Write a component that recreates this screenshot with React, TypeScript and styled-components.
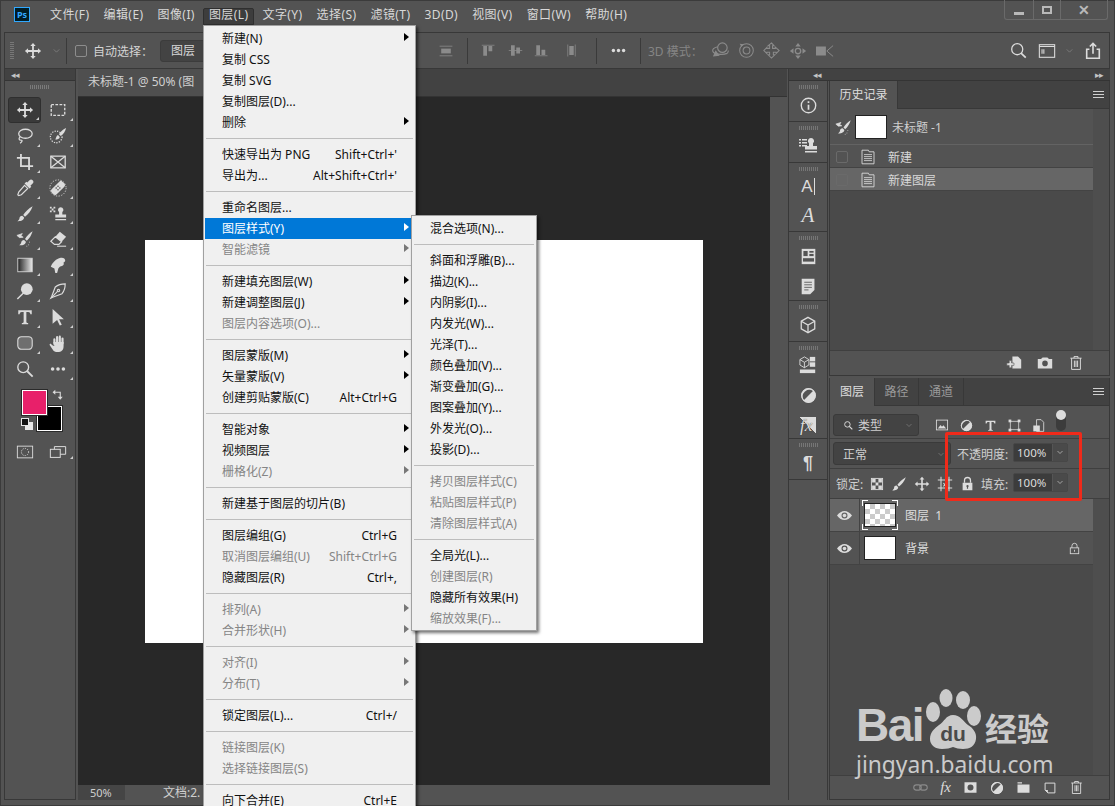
import React from "react";
import styled, { createGlobalStyle } from "styled-components";

const FONT = `"Noto Sans", "Noto Sans CJK SC", sans-serif`;

const GlobalStyle = createGlobalStyle`
  html, body { margin: 0; padding: 0; background: #535353; }
  body { font-family: ${FONT}; font-size: 12px; overflow: hidden; }
  * { box-sizing: border-box; }
`;

// drawings are all on a 20x20 box
const glyphs: Record<string, React.ReactNode> = {
  move: <path d="M10 1l3 3.5h-2V9h4.5V7l3.5 3-3.5 3v-2H11v4.5h2L10 19l-3-3.5h2V11H4.5v2L1 10l3.5-3v2H9V4.5H7z" />,
  chevron: <path d="M5 8l5 5 5-5" fill="none" stroke="currentColor" strokeWidth="1.2" />,
  swap: <g><path d="M4 6h11v10" fill="none" stroke="currentColor" strokeWidth="2" /><path d="M6 1.500v9L1 6zM10.500 14h9L15 19.500z" /></g>,
  marquee: <rect x="2.5" y="4" width="15" height="12" fill="none" stroke="currentColor" strokeWidth="1.5" strokeDasharray="3 1.6" />,
  lasso: <g fill="none" stroke="currentColor" strokeWidth="1.4"><ellipse cx="10.5" cy="7.5" rx="7.5" ry="5" /><path d="M4.5 11c-2 2-1 3.5 1 3.5s1.5 2-1 3.5" /></g>,
  quick: <g><circle cx="8" cy="11" r="6.5" fill="none" stroke="currentColor" strokeWidth="1.4" strokeDasharray="1.4 1.4" /><path d="M19 1c-3 1-6 4-8 7l2 2c3-2 5-5 6-9zM10 9c-2 1-2 3-3 5 2 0 5-1 5-3z" /></g>,
  crop: <path d="M5.5 1v13.5H19M1 5.5h13.5V19M1 5.5" fill="none" stroke="currentColor" strokeWidth="2" />,
  frame: <g fill="none" stroke="currentColor" strokeWidth="1.4"><rect x="2" y="3.5" width="16" height="13" /><path d="M2 3.5l16 13M18 3.5l-16 13" /></g>,
  dropper: <g><path d="M15 1.5a2.2 2.2 0 0 1 3.5 3.5L16 7.5l1 1-2 2-5.5-5.5 2-2 1 1z" /><path d="M9.5 7l3.5 3.5-7 7-3 1-1-1 1-3z" fill="none" stroke="currentColor" strokeWidth="1.3" /></g>,
  heal: <g><circle cx="10" cy="10" r="9" fill="none" stroke="currentColor" strokeDasharray="1.4 1.6" /><rect x="1.5" y="6" width="17" height="8" rx="2.5" transform="rotate(-45 10 10)" /><g fill="#535353"><circle cx="8" cy="10" r=".9" /><circle cx="10" cy="8" r=".9" /><circle cx="12" cy="10" r=".9" /><circle cx="10" cy="12" r=".9" /></g></g>,
  brush: <path d="M18.5 1.5C14 4 10.5 7.5 8 11l2 2c3.5-2.5 6.5-6 8.5-11.500zM7 12c-2 0-3 1-3.200 3-.1 1-1.300 2.300-2.300 3 3.500.3 7.500-1 7.500-4z" />,
  stamp: <g><path d="M13 2.500a3 3 0 0 1 1.800 5.400V10.500H19V14H7v-3.500h4.200V7.900A3 3 0 0 1 13 2.500zM7 15.500h12V17H7z" /><path d="M1 2h2v2H1zM5 2h2v2H5zM3 4h2v2H3zM1 6h2v2H1zM5 6h2v2H5z" /></g>,
  historyBrush: <g><path d="M18.500 1.500C15 3.500 12 7 10 10l2 2c3-2.500 5-6 6.500-10.500zM9 11c-2 0-3 1-3.200 3-.1 1-1.300 2.300-2.300 3 3.500.3 7.500-1 7.500-4z" /><path d="M1 6l6-2-1.500 2.500L8 8l-4 .5zM15 13v1M14 16v1M11.500 18h1" stroke="currentColor" strokeWidth=".8" /></g>,
  eraser: <g><path d="M12 2l7 5.500-5 5.500-7-5.500z" /><path d="M7 7.500l7 5.500-3 3H6l-4-3.500z" fill="none" stroke="currentColor" strokeWidth="1.3" /><path d="M9 18h10" stroke="currentColor" strokeWidth="1.2" /></g>,
  gradient: <g><defs><linearGradient id="gr"><stop offset="0" stopColor="#222" /><stop offset="1" stopColor="#e8e8e8" /></linearGradient></defs><rect x="2" y="2.500" width="16" height="15" fill="url(#gr)" stroke="#d6d6d6" strokeWidth="1" /></g>,
  smudge: <path d="M7 19l-1-5-4-2c2-5 6-9 11-10 3-.5 5 1 5 3 0 1-1 2-2 2.500 1 1 .5 3-1.500 3.500-2 .5-3 1-4 2.500L9 19z" />,
  dodge: <g><circle cx="12" cy="8" r="6.500" /><path d="M8 12.500L1.500 19" stroke="currentColor" strokeWidth="1.600" /></g>,
  pen: <g fill="none" stroke="currentColor" strokeWidth="1.300"><path d="M18 2c-4 0-8 1-11 3.500L3 16l-1 2 2-1 10.500-4c2.500-3 3.500-7 3.500-11z" /><path d="M3 17l6.500-6.500" /><circle cx="10.500" cy="9.500" r="1.300" /></g>,
  type: <path d="M2.500 2.500h15V7H16c-.2-1.500-1-2.500-2.500-2.500h-2v10.800c0 1 .6 1.500 2 1.500v1.200h-7v-1.200c1.400 0 2-.5 2-1.500V4.500h-2C5 4.500 4.200 5.500 4 7H2.500z" />,
  pathSel: <path d="M4 1l12.500 11.500h-5.300l3 6-2.200 1-3-6.200L4 17.500z" />,
  rrect: <rect x="2" y="3" width="16" height="14" rx="4" fill="#6f6f6f" stroke="currentColor" strokeWidth="1.200" />,
  hand: <g><path d="M6 11V6M9 9.500V3.500M12 9.500V3M15 10.500V5" stroke="currentColor" strokeWidth="2.400" strokeLinecap="round" /><path d="M4.800 9L6 13H4.500L1.500 10.500.5 12l4.500 6.500c1 1 2.500 1.500 4.500 1.500 4.500 0 6.700-2.500 6.700-6.500V9H4.800z" /></g>,
  zoom: <g fill="none" stroke="currentColor"><circle cx="8" cy="8" r="6" strokeWidth="1.500" /><path d="M12.500 12.500L18.500 18.500" strokeWidth="2" /></g>,
  dots: <g><circle cx="4" cy="10" r="2" /><circle cx="10" cy="10" r="2" /><circle cx="16" cy="10" r="2" /></g>,
  quickMask: <g fill="none" stroke="currentColor"><rect x="1.500" y="3.500" width="17" height="13" /><circle cx="10" cy="10" r="4" strokeDasharray="1.300 1.300" /></g>,
  screen: <g fill="none" stroke="currentColor" strokeWidth="1.100"><rect x="1.500" y="7" width="11" height="9" /><path d="M6 7V4h12.500v8.500H12.500" /></g>,
  search: <g fill="none" stroke="currentColor"><circle cx="8.500" cy="8.500" r="6.500" strokeWidth="1.500" /><path d="M13 13l5.500 5.500" strokeWidth="2" /></g>,
  workspace: <g fill="none" stroke="currentColor" strokeWidth="1.200"><rect x="1.500" y="3" width="17" height="14" /><path d="M1.500 5h17M4.500 8v5M6.500 8v5" strokeWidth="1.200" /></g>,
  share: <g fill="none" stroke="currentColor" strokeWidth="1.500"><path d="M6 8H3v10h14V8h-3" strokeWidth="1.800" /><path d="M10 13V2M6.500 5L10 1.500 13.500 5" strokeWidth="1.800" /></g>,
  alignMid: <g><path d="M2 4h16M2 16h16" stroke="currentColor" /><rect x="4" y="7" width="12" height="6" /></g>,
  alignTop: <g><path d="M1 3h17" stroke="currentColor" /><rect x="3" y="4" width="5" height="13" /><rect x="10" y="4" width="5" height="7" /></g>,
  alignCenter: <g><path d="M1 10h18" stroke="currentColor" /><rect x="4" y="3" width="5" height="14" /><rect x="11" y="6" width="5" height="8" /></g>,
  alignBottom: <g><path d="M1 17h17" stroke="currentColor" /><rect x="3" y="3" width="5" height="13" /><rect x="10" y="9" width="5" height="7" /></g>,
  distribute: <g><path d="M5 2v16M15 2v16" stroke="currentColor" /><rect x="7" y="4" width="6" height="12" /></g>,
  orbit: <g fill="none" stroke="currentColor" strokeWidth="1.200"><circle cx="12" cy="7" r="5" /><path d="M7 6c-4 1-6 3-5 5 1 3 10 4 15 2 1-.5 1.500-1.500 1-3" /><path d="M5 11l3 4-5 .5z" fill="currentColor" /></g>,
  roll: <g fill="none" stroke="currentColor" strokeWidth="1.200"><circle cx="10" cy="10" r="8" /><circle cx="10" cy="10" r="4" /><path d="M2 2l5 .5L4 6z" fill="currentColor" stroke="none" /></g>,
  pan3d: <g fill="none" stroke="currentColor" strokeWidth="1.200"><path d="M10 1l3 3.500h-1.800v3h3.300V6L19 10l-3.500 3.500V12h-3.300v3H14l-4 4-4-4h1.800v-3H4.500v1.500L1 10l3.500-3.500v1h3.300v-3H6z" /></g>,
  slide3d: <g><circle cx="10" cy="10" r="3" fill="none" stroke="currentColor" strokeWidth="1.500" /><path d="M10 1l3 4H7zM10 19l3-4H7zM1 10l4-3v6zM19 10l-4-3v6z" /></g>,
  camera3d: <g><rect x="0" y="5" width="11" height="10" /><path d="M12 10l7-6M12 10l7 6" fill="none" stroke="currentColor" strokeWidth="1.100" /></g>,
  info: <g fill="none" stroke="currentColor"><circle cx="10" cy="10" r="8.500" strokeWidth="1.600" /><path d="M10 9v6M10 5v2" strokeWidth="2" /></g>,
  stampList: <g><path d="M1 3h2v1.500H1zM4 3h5v1.500H4zM1 6h2v1.500H1zM4 6h5v1.500H4zM1 9h2v1.500H1zM4 9h5v1.500H4z" /><path d="M13 2a3 3 0 0 1 2 5.300V10h4v3.500H7V10h4V7.300A3 3 0 0 1 13 2zM7 15h12v1.500H7z" /></g>,
  props: <g><rect x="2" y="1" width="16" height="18" /><g fill="#535353"><rect x="4" y="3.500" width="5" height="6" /><rect x="11" y="3.500" width="5" height="2" /><rect x="11" y="7" width="5" height="2.500" /><rect x="3.500" y="12" width="13" height="4" /></g></g>,
  notes: <g><path d="M2 1h15v13l-5 5H2z" /><g stroke="#535353" strokeWidth="1"><path d="M5 5h9M5 8h9M5 11h9M5 14h5" /></g></g>,
  cube: <g fill="none" stroke="currentColor" strokeWidth="1.400"><path d="M10 1.500l7.500 4.300v8.400L10 18.500l-7.500-4.300V5.800z" /><path d="M2.500 5.800L10 10l7.500-4.200M10 10v8.500" /></g>,
  libs: <g><path d="M6 1l5 3v6l-5 3-5-3V4z" fill="none" stroke="currentColor" /><path d="M1 4l5 3 5-3M6 7v6" fill="none" stroke="currentColor" /><rect x="12" y="1" width="6" height="5" /><rect x="12" y="7" width="6" height="5" /><rect x="1" y="15" width="17" height="4" /></g>,
  adjust: <g><circle cx="10" cy="10" r="8.500" /><path d="M4.200 15.800A8.500 8.500 0 0 1 15.800 4.200z" fill="#535353" stroke="currentColor" strokeWidth="0" /><circle cx="10" cy="10" r="8" fill="none" stroke="currentColor" strokeWidth="1.400" /></g>,
  doc: <g fill="none" stroke="currentColor"><path d="M2.500 1.500h8l1 2h6v15h-15z" strokeWidth="1.100" /><path d="M5 7h10M5 9.500h10M5 12h10M5 14.500h10" strokeWidth="1" /></g>,
  newSnap: <g><path d="M8 2h7l4 4v11H8z" /><path d="M1 10h3V7h3v3h3v3H7v3H4v-3H1z" stroke="#535353" strokeWidth=".7" /></g>,
  camera: <path fillRule="evenodd" d="M1 5h4l2-2h6l2 2h4v12H1zM10 7a3.500 3.500 0 1 0 0 7 3.500 3.500 0 0 0 0-7z" />,
  trash: <g fill="none" stroke="currentColor" strokeWidth="1.200"><path d="M3 4h14M7.500 4V2h5v2M4.500 4v14h11V4M8 7v8M10 7v8M12 7v8" /></g>,
  filterSearch: <g fill="none" stroke="currentColor"><circle cx="8" cy="8" r="5" strokeWidth="1.700" /><path d="M11.500 11.500L17 17" strokeWidth="2.200" /></g>,
  imageF: <g><rect x="2" y="3" width="16" height="14" fill="none" stroke="currentColor" strokeWidth="1.200" /><path d="M4 15l4-5 2 2.500 2-2 4 4.500z" /></g>,
  transformF: <g fill="none" stroke="currentColor" strokeWidth="1.200"><rect x="3.500" y="3.500" width="13" height="13" /><g fill="currentColor"><rect x="1.500" y="1.500" width="3" height="3" /><rect x="15.500" y="1.500" width="3" height="3" /><rect x="1.500" y="15.500" width="3" height="3" /><rect x="15.500" y="15.500" width="3" height="3" /></g></g>,
  smartF: <g><path d="M7 1h7l4 4v14H7z" fill="none" stroke="currentColor" strokeWidth="1.300" /><rect x="2" y="10" width="10" height="9" /></g>,
  checker: <g><rect x="2" y="2" width="16" height="16" fill="none" stroke="currentColor" strokeWidth="1.300" /><path d="M3 3h5v5H3zM12 3h5v5h-5zM8 8h4v4H8zM3 12h5v5H3zM12 12h5v5h-5z" /></g>,
  artboard: <g fill="none" stroke="currentColor" strokeWidth="1.300"><path d="M5 1v18M15 1v18M1 5h18M1 15h18" /><path d="M8 9l4 4M8 13l4-4" /></g>,
  lock: <g><path d="M6 9V6a4 4 0 0 1 8 0v3" fill="none" stroke="currentColor" strokeWidth="1.700" /><path fillRule="evenodd" d="M3.500 9h13v10h-13zM10 12a1.500 1.500 0 0 0-.8 2.800V17h1.600v-2.200A1.500 1.500 0 0 0 10 12z" /></g>,
  lockOpen: <g fill="none" stroke="currentColor" strokeWidth="1.300"><path d="M6 9V6a4 4 0 0 1 8 0v3" /><rect x="3.500" y="9" width="13" height="9" /><path d="M10 12v3" /></g>,
  eye: <g><path fillRule="evenodd" d="M0 10c3-4 6.500-6 10-6s7 2 10 6c-3 4-6.500 6-10 6s-7-2-10-6zm10-4a4 4 0 1 0 0 8 4 4 0 0 0 0-8z" /><circle cx="10" cy="10" r="2.400" /></g>,
  link: <g fill="none" stroke="currentColor" strokeWidth="1.400"><rect x="1" y="6.500" width="10" height="7" rx="3.500" /><rect x="9" y="6.500" width="10" height="7" rx="3.500" /></g>,
  mask: <path fillRule="evenodd" d="M2 3h16v14H2zM10 6a4 4 0 1 0 0 8 4 4 0 0 0 0-8z" />,
  folder: <path d="M2 3h6v1.500H2zM2 6h16v11H2z" />,
  newLayer: <g><path d="M3 3h14v14H7l-4-4z" fill="none" stroke="currentColor" strokeWidth="1.400" /><path d="M3 13h4v4z" /></g>,
};

const Svg = styled.svg<{ $dim?: boolean; $color?: string }>`
  display: block;
  flex: none;
  color: ${(p) => p.$color || (p.$dim ? "#8b8b8b" : "#dcdcdc")};
`;

const Glyph = ({ name, size = 18, dim, color }: { name: string; size?: number; dim?: boolean; color?: string }) => (
  <Svg viewBox="0 0 20 20" width={size} height={size} fill="currentColor" $dim={dim} $color={color}>
    {glyphs[name]}
  </Svg>
);

const Page = styled.div`
  position: relative;
  width: 1115px;
  height: 806px;
  overflow: hidden;
  background: #535353;
  display: flex;
  flex-direction: column;
  box-shadow: inset 0 0 0 1px #3b3b3b;
`;

/* title bar */
const TitleBar = styled.div`
  height: 32px;
  flex: none;
  display: flex;
  align-items: flex-start;
  padding-left: 14px;
`;
const PsLogo = styled.div`
  width: 16px;
  height: 15px;
  margin-top: 7px;
  margin-right: 20px;
  border: 1px solid #31a8ff;
  background: #001d26;
  color: #31a8ff;
  font-size: 9px;
  font-weight: 700;
  line-height: 13px;
  text-align: center;
`;
const MenuBar = styled.div`
  display: flex;
  gap: 14px;
  padding-top: 6px;
  color: #d8d8d8;
  line-height: 18px;
  letter-spacing: 0.42px;
`;
const MenuTitle = styled.span<{ $open?: boolean }>`
  position: relative;
  white-space: nowrap;
  ${(p) =>
    p.$open &&
    `&::before {
      content: "";
      position: absolute;
      inset: 2px -6px -1px -6px;
      background: #3d3d3d;
      border: 1px solid #2f2f2f;
      border-radius: 2px 2px 0 0;
      z-index: 0;
    }`}
  & > span {
    position: relative;
  }
`;
const WindowButtons = styled.div`
  margin-left: auto;
  margin-right: 7px;
  display: flex;
  height: 20px;
  border: 1px solid #6a6a6a;
  border-top: 0;
  border-radius: 0 0 3px 3px;
`;
const WindowButton = styled.div<{ $w: number }>`
  width: ${(p) => p.$w}px;
  display: flex;
  align-items: center;
  justify-content: center;
  color: #b9b9b9;
  font-size: 14px;
  font-weight: 700;
  & + & {
    border-left: 1px solid #6a6a6a;
  }
`;
const MinBar = styled.div`
  width: 10px;
  height: 3px;
  margin-top: 8px;
  background: #b9b9b9;
`;
const MaxBox = styled.div`
  width: 10px;
  height: 8px;
  border: 2px solid #b9b9b9;
`;

/* options bar */
const OptionsBar = styled.div`
  height: 37px;
  flex: none;
  margin: 0 5px 0 4px;
  display: flex;
  align-items: center;
  border: 1px solid #383838;
`;
const Slot = styled.div<{ $w: number }>`
  width: ${(p) => p.$w}px;
  flex: none;
  display: flex;
  align-items: center;
  justify-content: center;
`;
const Grip = styled.div`
  width: 4px;
  height: 18px;
  background: repeating-linear-gradient(to bottom, #777 0 1px, transparent 1px 2px);
`;
const VDivider = styled.div`
  width: 1px;
  height: 26px;
  background: #3a3a3a;
`;
const CheckBox = styled.div<{ $dim?: boolean }>`
  width: 12px;
  height: 12px;
  flex: none;
  border: 1px solid ${(p) => (p.$dim ? "#6a6a6a" : "#8d8d8d")};
  border-radius: 2px;
`;
const OptionLabel = styled.span<{ $dim?: boolean; $w: number }>`
  width: ${(p) => p.$w}px;
  flex: none;
  white-space: nowrap;
  color: ${(p) => (p.$dim ? "#858585" : "#d4d4d4")};
`;
const OptionSelect = styled.div`
  width: 56px;
  height: 22px;
  padding-left: 10px;
  flex: none;
  line-height: 20px;
  color: #d8d8d8;
  background: #434343;
  border: 1px solid #3c3c3c;
  border-radius: 3px;
`;
const Spacer = styled.div`
  flex: 1;
`;

/* workspace */
const Workspace = styled.div`
  flex: 1;
  min-height: 0;
  display: flex;
  margin: 0 5px 6px 4px;
`;
const CollapseBar = styled.div<{ $between?: boolean }>`
  height: 12px;
  flex: none;
  display: flex;
  align-items: center;
  justify-content: ${(p) => (p.$between ? "space-between" : "flex-start")};
  padding: ${(p) => (p.$between ? "0 7px 0 24px" : "0 0 0 6px")};
  background: #424242;
  color: #c4c4c4;
  font-size: 9px;
  letter-spacing: -1px;
  line-height: 1;
  border-bottom: 1px solid #343434;
`;

/* tool column */
const ToolColumn = styled.div`
  width: 72px;
  flex: none;
  display: flex;
  flex-direction: column;
  border-left: 1px solid #383838;
  border-right: 1px solid #383838;
  border-bottom: 1px solid #383838;
`;
const ToolGrip = styled.div`
  height: 4px;
  width: 20px;
  margin: 4px auto 8px;
  background: repeating-linear-gradient(to right, #7a7a7a 0 1px, transparent 1px 2px);
`;
const ToolGrid = styled.div`
  display: grid;
  grid-template-columns: 33px 33px;
  grid-auto-rows: 25.9px;
  padding-left: 3px;
`;
const ToolButton = styled.div<{ $active?: boolean; $more?: boolean }>`
  position: relative;
  display: flex;
  align-items: center;
  justify-content: center;
  ${(p) => p.$active && "background: #3a3a3a; border: 1px solid #2f2f2f; border-radius: 3px;"}
  ${(p) =>
    p.$more &&
    `&::after {
      content: "";
      position: absolute;
      right: 1px;
      bottom: 2px;
      border-left: 3px solid transparent;
      border-bottom: 3px solid #cfcfcf;
    }`}
`;
const Swatches = styled.div`
  position: relative;
  height: 52px;
  margin-top: 7px;
`;
const Swatch = styled.div<{ $x: number; $y: number; $c: string }>`
  position: absolute;
  left: ${(p) => p.$x}px;
  top: ${(p) => p.$y}px;
  width: 25px;
  height: 25px;
  background: ${(p) => p.$c};
  border: 1px solid #fff;
  outline: 1px solid #2a2a2a;
`;
const SwapIcon = styled.div`
  position: absolute;
  left: 47px;
  top: 0;
`;
const DefaultBack = styled.div`
  position: absolute;
  left: 20px;
  top: 33px;
  width: 8px;
  height: 8px;
  background: #e6e6e6;
`;
const DefaultFront = styled.div`
  position: absolute;
  left: 16px;
  top: 29px;
  width: 8px;
  height: 8px;
  background: #111;
  border: 1px solid #e6e6e6;
`;
const ModeRow = styled.div`
  display: grid;
  grid-template-columns: 33px 33px;
  padding-left: 3px;
  margin-top: 2px;
`;

/* document */
const DocumentArea = styled.div`
  width: 709px;
  margin-left: 2px;
  flex: none;
  display: flex;
  flex-direction: column;
`;
const TabStrip = styled.div`
  height: 28px;
  flex: none;
  background: #424242;
  border-bottom: 1px solid #333;
`;
const DocTab = styled.div`
  width: 200px;
  height: 100%;
  padding-left: 10px;
  line-height: 26px;
  color: #cfcfcf;
  background: #4f4f4f;
  white-space: nowrap;
`;
const CanvasRow = styled.div`
  flex: 1;
  min-height: 0;
  display: flex;
`;
const Pasteboard = styled.div`
  flex: 1;
  display: flex;
  align-items: center;
  justify-content: center;
  background: #282828;
`;
const Artboard = styled.div`
  width: 558px;
  height: 403px;
  background: #fff;
`;
const ScrollStrip = styled.div`
  width: 17px;
  flex: none;
  background: #535353;
`;
const StatusBar = styled.div`
  height: 15px;
  flex: none;
  display: flex;
  line-height: 15px;
  font-size: 11px;
  color: #cfcfcf;
  background: #535353;
`;
const ZoomBox = styled.div`
  width: 47px;
  padding-left: 12px;
  background: #454545;
`;
const DocInfo = styled.div`
  padding-left: 38px;
  font-size: 12px;
  white-space: nowrap;
`;

/* right side */
const RightSide = styled.div`
  flex: 1;
  min-width: 0;
  margin-left: 1px;
  display: flex;
  flex-direction: column;
  border-left: 1px solid #383838;
`;
const DockAndPanels = styled.div`
  flex: 1;
  min-height: 0;
  display: flex;
`;
const Dock = styled.div`
  width: 39px;
  flex: none;
  display: flex;
  flex-direction: column;
  border-right: 1px solid #383838;
`;
const DockGroup = styled.div<{ $h: number }>`
  height: ${(p) => p.$h}px;
  flex: none;
  display: flex;
  flex-direction: column;
  align-items: center;
  border-bottom: 1px solid #383838;
`;
const DockGrip = styled.div`
  width: 19px;
  height: 4px;
  flex: none;
  margin-top: 4px;
  background: repeating-linear-gradient(to right, #767676 0 1px, transparent 1px 2px);
`;
const DockSlot = styled.div<{ $h: number }>`
  height: ${(p) => p.$h}px;
  flex: none;
  display: flex;
  align-items: center;
  justify-content: center;
  color: #dcdcdc;
`;
const CharA = styled.span`
  font-family: "Liberation Sans", sans-serif;
  font-size: 17px;
  border-right: 1px solid #dcdcdc;
  line-height: 17px;
  padding-right: 1px;
`;
const ScriptA = styled.span`
  font-family: "Liberation Serif", serif;
  font-style: italic;
  font-size: 21px;
  line-height: 20px;
`;
const FxBadge = styled.div`
  width: 16px;
  height: 17px;
  font-family: "Liberation Serif", serif;
  font-style: italic;
  font-size: 17px;
  line-height: 18px;
  text-shadow: 0 0 1px #333;
  background: linear-gradient(225deg, #dcdcdc 0 50%, transparent 50%);
`;
const Pilcrow = styled.span`
  font-family: "Liberation Sans", sans-serif;
  font-weight: 700;
  font-size: 18px;
`;

const Panels = styled.div`
  flex: 1;
  min-width: 0;
  margin-left: 1px;
  display: flex;
  flex-direction: column;
  gap: 2px;
`;
const Panel = styled.div<{ $h: number }>`
  height: ${(p) => p.$h}px;
  flex: none;
  display: flex;
  flex-direction: column;
  background: #4a4a4a;
  border-right: 1px solid #383838;
  border-left: 1px solid #383838;
  border-bottom: 1px solid #383838;
`;
const PanelTabs = styled.div`
  height: 28px;
  flex: none;
  display: flex;
  background: #424242;
  border-bottom: 1px solid #383838;
  position: relative;
`;
const PanelTab = styled.div<{ $active?: boolean; $w: number }>`
  width: ${(p) => p.$w}px;
  height: ${(p) => (p.$active ? "28px" : "27px")};
  line-height: 28px;
  text-align: center;
  color: ${(p) => (p.$active ? "#dedede" : "#9a9a9a")};
  background: ${(p) => (p.$active ? "#535353" : "transparent")};
  border-right: 1px solid #383838;
`;
const PanelMenu = styled.div`
  position: absolute;
  right: 5px;
  top: 10px;
  width: 11px;
  height: 7px;
  border-top: 1px solid #cfcfcf;
  border-bottom: 1px solid #cfcfcf;
  &::after {
    content: "";
    display: block;
    height: 1px;
    margin-top: 2px;
    background: #cfcfcf;
  }
`;
const PanelBody = styled.div`
  flex: 1;
  min-height: 0;
  display: flex;
`;
const ListColumn = styled.div`
  flex: 1;
  min-width: 0;
`;
const ScrollGutter = styled.div`
  width: 16px;
  flex: none;
  background: #4e4e4e;
`;
const HistorySnap = styled.div`
  height: 36px;
  display: flex;
  align-items: center;
  padding: 1px 0 0 5px;
  gap: 3px;
  color: #cfcfcf;
  background: #535353;
  border-bottom: 1px solid #636363;
`;
const SnapName = styled.span`
  margin-left: 2px;
`;
const Thumb = styled.div<{ $w?: number; $checker?: boolean }>`
  width: ${(p) => p.$w || 32}px;
  height: 24px;
  flex: none;
  background: #fff;
  border: 1px solid #222;
  ${(p) =>
    p.$checker &&
    `background-color: #fff;
     background-image: conic-gradient(#cbcbcb 25%, #fff 25% 50%, #cbcbcb 50% 75%, #fff 75%);
     background-size: 10px 10px;`}
`;
const HistoryRow = styled.div<{ $active?: boolean }>`
  height: 23px;
  display: flex;
  align-items: center;
  padding: 1px 0 0 6px;
  color: #d8d8d8;
  background: ${(p) => (p.$active ? "#666" : "#535353")};
  border-bottom: 1px solid #434343;
`;
const RowIcon = styled.div`
  margin-left: 12px;
  margin-right: 12px;
`;
const PanelFooter = styled.div<{ $h: number; $pr: number; $gap: number }>`
  height: ${(p) => p.$h}px;
  flex: none;
  display: flex;
  align-items: center;
  justify-content: flex-end;
  gap: ${(p) => p.$gap}px;
  padding-right: ${(p) => p.$pr}px;
  background: #535353;
  border-top: 1px solid #3f3f3f;
`;
const FooterFx = styled.span`
  position: relative;
  font-family: "Liberation Serif", serif;
  font-style: italic;
  font-size: 15px;
  color: #dcdcdc;
`;
const ControlRow = styled.div<{ $h: number; $pt?: number }>`
  height: ${(p) => p.$h}px;
  flex: none;
  display: flex;
  align-items: center;
  padding: ${(p) => p.$pt || 0}px 0 0 3px;
  color: #cfcfcf;
  background: #535353;
  border-bottom: 1px solid #3f3f3f;
`;
const DarkSelect = styled.div<{ $w: number; $h: number }>`
  width: ${(p) => p.$w}px;
  height: ${(p) => p.$h}px;
  flex: none;
  display: flex;
  align-items: center;
  justify-content: space-between;
  padding: 0 4px 0 9px;
  background: #434343;
  border: 1px solid #3a3a3a;
  border-radius: 3px;
`;
const FilterName = styled.span`
  flex: 1;
  margin-left: 4px;
`;
const FilterToggle = styled.div`
  position: relative;
  width: 10px;
  height: 18px;
  margin-left: 6px;
  margin-top: -6px;
  background: #3c3c3c;
  border-radius: 5px;
  &::before {
    content: "";
    position: absolute;
    left: 0;
    top: -3px;
    width: 10px;
    height: 10px;
    background: #ddd;
    border-radius: 50%;
  }
`;
const RowLabel = styled.span<{ $w: number }>`
  width: ${(p) => p.$w}px;
  flex: none;
  white-space: nowrap;
`;
const LockLabel = styled(RowLabel)`
  padding-left: 3px;
`;
const NumberBox = styled.div<{ $up: number }>`
  width: 55px;
  height: 19px;
  flex: none;
  display: flex;
  margin-top: -${(p) => p.$up}px;
  background: #3c3c3c;
  border: 1px solid #474747;
  border-radius: 2px;
  line-height: 17px;
  color: #dcdcdc;
  font-size: 11.5px;
`;
const NumberValue = styled.span`
  width: 39px;
  padding-left: 3px;
  border-right: 1px solid #555;
`;
const NumberArrow = styled.div`
  flex: 1;
  display: flex;
  align-items: center;
  justify-content: center;
  background: #4a4a4a;
`;
const LockIcons = styled.div`
  display: flex;
  align-items: center;
  gap: 7px;
  margin-right: 6px;
`;
const LayerList = styled.div`
  flex: 1;
  min-width: 0;
`;
const LayerRow = styled.div<{ $active?: boolean }>`
  height: 33px;
  display: flex;
  align-items: center;
  color: #dedede;
  background: ${(p) => (p.$active ? "#666" : "#535353")};
  border-bottom: 1px solid #434343;
`;
const EyeCell = styled.div`
  width: 30px;
  height: 100%;
  flex: none;
  display: flex;
  align-items: center;
  justify-content: center;
  border-right: 1px solid #434343;
`;
const LayerThumb = styled.div<{ $sel?: boolean }>`
  position: relative;
  margin: 0 9px 0 4px;
  ${(p) =>
    p.$sel &&
    `&::after {
      content: "";
      position: absolute;
      inset: -3px -2px;
      background:
        linear-gradient(#fff,#fff) 0 0/6px 1px no-repeat,
        linear-gradient(#fff,#fff) 0 0/1px 6px no-repeat,
        linear-gradient(#fff,#fff) 100% 0/6px 1px no-repeat,
        linear-gradient(#fff,#fff) 100% 0/1px 6px no-repeat,
        linear-gradient(#fff,#fff) 0 100%/6px 1px no-repeat,
        linear-gradient(#fff,#fff) 0 100%/1px 6px no-repeat,
        linear-gradient(#fff,#fff) 100% 100%/6px 1px no-repeat,
        linear-gradient(#fff,#fff) 100% 100%/1px 6px no-repeat;
    }`}
`;
const LayerName = styled.span`
  flex: 1;
  white-space: pre;
`;
const LayerLock = styled.div`
  margin-right: 12px;
`;

/* menus */
const MenuPanel = styled.div<{ $x: number; $y: number; $w: number }>`
  position: absolute;
  left: ${(p) => p.$x}px;
  top: ${(p) => p.$y}px;
  width: ${(p) => p.$w}px;
  padding: 1.5px 1px;
  background: #f0f0f0;
  border: 1px solid #a0a0a0;
  box-shadow: 2px 2px 3px rgba(0, 0, 0, 0.55);
  color: #111;
`;
const MenuRow = styled.div<{ $selected?: boolean; $disabled?: boolean; $arrow?: boolean }>`
  position: relative;
  height: 21px;
  display: flex;
  align-items: center;
  justify-content: space-between;
  padding: 0 17px 0 17px;
  white-space: nowrap;
  color: ${(p) => (p.$selected ? "#fff" : p.$disabled ? "#858585" : "#111")};
  background: ${(p) => (p.$selected ? "#0078d7" : "transparent")};
  ${(p) =>
    p.$arrow &&
    `&::after {
      content: "";
      position: absolute;
      right: 5px;
      top: 5px;
      border-left: 5px solid ${p.$selected ? "#fff" : p.$disabled ? "#777" : "#000"};
      border-top: 4.5px solid transparent;
      border-bottom: 4.5px solid transparent;
    }`}
`;
const MenuSep = styled.div`
  height: 1px;
  margin: 5px 1px;
  background: #bdbdbd;
`;

const Callout = styled.div`
  position: absolute;
  left: 945px;
  top: 432px;
  width: 137px;
  height: 69px;
  border: 3px solid #f02a1a;
  border-radius: 2px;
`;

/* watermark */
const Watermark = styled.div`
  position: absolute;
  left: 856px;
  top: 688px;
  width: 200px;
  color: #cbcbcb;
  pointer-events: none;
`;
const MarkTop = styled.div`
  display: flex;
  align-items: flex-end;
  height: 62px;
`;
const MarkBai = styled.span`
  width: 68px;
  flex: none;
  font-family: "Liberation Sans", sans-serif;
  font-weight: 700;
  font-size: 46px;
  line-height: 50px;
  letter-spacing: -1.5px;
`;
const MarkPaw = styled.div`
  position: relative;
  width: 58px;
  height: 62px;
  flex: none;
`;
const MarkDu = styled.span`
  position: absolute;
  left: 0;
  right: 0;
  bottom: 5px;
  text-align: center;
  font-family: "Liberation Sans", sans-serif;
  font-weight: 700;
  font-size: 21px;
  line-height: 22px;
  color: #4a4a4a;
`;
const MarkCn = styled.span`
  font-weight: 700;
  font-size: 32px;
  line-height: 42px;
  margin-left: 3px;
  white-space: nowrap;
`;
const MarkUrl = styled.div`
  font-size: 22.8px;
  line-height: 30px;
  white-space: nowrap;
`;

type Item = { t?: string; k?: string; arrow?: boolean; off?: boolean; sel?: boolean; sep?: boolean };
const sep: Item = { sep: true };

const layerMenu: Item[] = [
  { t: "新建(N)", arrow: true },
  { t: "复制 CSS" },
  { t: "复制 SVG" },
  { t: "复制图层(D)..." },
  { t: "删除", arrow: true },
  sep,
  { t: "快速导出为 PNG", k: "Shift+Ctrl+'" },
  { t: "导出为...", k: "Alt+Shift+Ctrl+'" },
  sep,
  { t: "重命名图层..." },
  { t: "图层样式(Y)", arrow: true, sel: true },
  { t: "智能滤镜", arrow: true, off: true },
  sep,
  { t: "新建填充图层(W)", arrow: true },
  { t: "新建调整图层(J)", arrow: true },
  { t: "图层内容选项(O)...", off: true },
  sep,
  { t: "图层蒙版(M)", arrow: true },
  { t: "矢量蒙版(V)", arrow: true },
  { t: "创建剪贴蒙版(C)", k: "Alt+Ctrl+G" },
  sep,
  { t: "智能对象", arrow: true },
  { t: "视频图层", arrow: true },
  { t: "栅格化(Z)", arrow: true, off: true },
  sep,
  { t: "新建基于图层的切片(B)" },
  sep,
  { t: "图层编组(G)", k: "Ctrl+G" },
  { t: "取消图层编组(U)", k: "Shift+Ctrl+G", off: true },
  { t: "隐藏图层(R)", k: "Ctrl+," },
  sep,
  { t: "排列(A)", arrow: true, off: true },
  { t: "合并形状(H)", arrow: true, off: true },
  sep,
  { t: "对齐(I)", arrow: true, off: true },
  { t: "分布(T)", arrow: true, off: true },
  sep,
  { t: "锁定图层(L)...", k: "Ctrl+/" },
  sep,
  { t: "链接图层(K)", off: true },
  { t: "选择链接图层(S)", off: true },
  sep,
  { t: "向下合并(E)", k: "Ctrl+E" },
];

const styleMenu: Item[] = [
  { t: "混合选项(N)..." },
  sep,
  { t: "斜面和浮雕(B)..." },
  { t: "描边(K)..." },
  { t: "内阴影(I)..." },
  { t: "内发光(W)..." },
  { t: "光泽(T)..." },
  { t: "颜色叠加(V)..." },
  { t: "渐变叠加(G)..." },
  { t: "图案叠加(Y)..." },
  { t: "外发光(O)..." },
  { t: "投影(D)..." },
  sep,
  { t: "拷贝图层样式(C)", off: true },
  { t: "粘贴图层样式(P)", off: true },
  { t: "清除图层样式(A)", off: true },
  sep,
  { t: "全局光(L)..." },
  { t: "创建图层(R)", off: true },
  { t: "隐藏所有效果(H)" },
  { t: "缩放效果(F)...", off: true },
];

const renderMenu = (items: Item[]) =>
  items.map((it, i) =>
    it.sep ? (
      <MenuSep key={i} />
    ) : (
      <MenuRow key={i} $selected={it.sel} $disabled={it.off} $arrow={it.arrow}>
        <span>{it.t}</span>
        {it.k && <span>{it.k}</span>}
      </MenuRow>
    )
  );

const menuTitles = ["文件(F)", "编辑(E)", "图像(I)", "图层(L)", "文字(Y)", "选择(S)", "滤镜(T)", "3D(D)", "视图(V)", "窗口(W)", "帮助(H)"];

const tools: [string, boolean][] = [
  ["move", true], ["marquee", true],
  ["lasso", true], ["quick", true],
  ["crop", true], ["frame", false],
  ["dropper", true], ["heal", true],
  ["brush", true], ["stamp", true],
  ["historyBrush", true], ["eraser", true],
  ["gradient", true], ["smudge", true],
  ["dodge", true], ["pen", true],
  ["type", true], ["pathSel", true],
  ["rrect", true], ["hand", true],
  ["zoom", false], ["dots", true],
];

export default function App() {
  return (
    <Page>
      <GlobalStyle />
      <TitleBar>
        <PsLogo>Ps</PsLogo>
        <MenuBar>
          {menuTitles.map((m) => (
            <MenuTitle key={m} $open={m === "图层(L)"}>
              <span>{m}</span>
            </MenuTitle>
          ))}
        </MenuBar>
        <WindowButtons>
          <WindowButton $w={28}><MinBar /></WindowButton>
          <WindowButton $w={27}><MaxBox /></WindowButton>
          <WindowButton $w={47}>✕</WindowButton>
        </WindowButtons>
      </TitleBar>

      <OptionsBar>
        <Slot $w={14}><Grip /></Slot>
        <Slot $w={28}><Glyph name="move" size={18} /></Slot>
        <Slot $w={18}><Glyph name="chevron" size={11} dim /></Slot>
        <Slot $w={3}><VDivider /></Slot>
        <Slot $w={25}><CheckBox /></Slot>
        <OptionLabel $w={67}>自动选择：</OptionLabel>
        <OptionSelect>图层</OptionSelect>
        <Spacer />
        <Slot $w={28}><Glyph name="alignMid" size={16} dim /></Slot>
        <Slot $w={14}><VDivider /></Slot>
        <Slot $w={28}><Glyph name="alignTop" size={15} dim /></Slot>
        <Slot $w={26}><Glyph name="alignCenter" size={15} dim /></Slot>
        <Slot $w={26}><Glyph name="alignBottom" size={15} dim /></Slot>
        <Slot $w={34}><Glyph name="distribute" size={15} dim /></Slot>
        <Slot $w={16}><VDivider /></Slot>
        <Slot $w={28}><Glyph name="dots" size={17} /></Slot>
        <Slot $w={16}><VDivider /></Slot>
        <OptionLabel $dim $w={60}>3D 模式：</OptionLabel>
        <Slot $w={24}><Glyph name="orbit" size={19} dim /></Slot>
        <Slot $w={28}><Glyph name="roll" size={17} dim /></Slot>
        <Slot $w={22}><Glyph name="pan3d" size={17} dim /></Slot>
        <Slot $w={32}><Glyph name="slide3d" size={18} dim /></Slot>
        <Slot $w={22}><Glyph name="camera3d" size={18} dim /></Slot>
        <Slot $w={166} />
        <Slot $w={32}><Glyph name="search" size={17} /></Slot>
        <Slot $w={26}><Glyph name="workspace" size={18} /></Slot>
        <Slot $w={18}><Glyph name="chevron" size={11} dim /></Slot>
        <Slot $w={30}><Glyph name="share" size={18} /></Slot>
        <Slot $w={1} />
      </OptionsBar>

      <Workspace>
        <ToolColumn>
          <CollapseBar>◂◂</CollapseBar>
          <ToolGrip />
          <ToolGrid>
            {tools.map(([name, more], i) => (
              <ToolButton key={name} $active={i === 0} $more={more}>
                <Glyph name={name} size={18} />
              </ToolButton>
            ))}
          </ToolGrid>
          <Swatches>
            <Swatch $x={32} $y={17} $c="#000" />
            <Swatch $x={17} $y={1} $c="#e8206a" />
            <SwapIcon><Glyph name="swap" size={11} /></SwapIcon>
            <DefaultBack />
            <DefaultFront />
          </Swatches>
          <ModeRow>
            <ToolButton><Glyph name="quickMask" size={18} /></ToolButton>
            <ToolButton $more><Glyph name="screen" size={18} /></ToolButton>
          </ModeRow>
        </ToolColumn>

        <DocumentArea>
          <TabStrip>
            <DocTab>未标题-1 @ 50% (图</DocTab>
          </TabStrip>
          <CanvasRow>
            <Pasteboard><Artboard /></Pasteboard>
            <ScrollStrip />
          </CanvasRow>
          <StatusBar>
            <ZoomBox>50%</ZoomBox>
            <DocInfo>文档:2.</DocInfo>
          </StatusBar>
        </DocumentArea>

        <RightSide>
          <CollapseBar $between>
            <span>◂◂</span>
            <span>▸▸</span>
          </CollapseBar>
          <DockAndPanels>
            <Dock>
              <DockGroup $h={41}>
                <DockGrip />
                <DockSlot $h={32}><Glyph name="info" size={17} /></DockSlot>
              </DockGroup>
              <DockGroup $h={41}>
                <DockGrip />
                <DockSlot $h={32}><Glyph name="stampList" size={20} /></DockSlot>
              </DockGroup>
              <DockGroup $h={69}>
                <DockGrip />
                <DockSlot $h={30}><CharA>A</CharA></DockSlot>
                <DockSlot $h={28}><ScriptA>A</ScriptA></DockSlot>
              </DockGroup>
              <DockGroup $h={69}>
                <DockGrip />
                <DockSlot $h={32}><Glyph name="props" size={17} /></DockSlot>
                <DockSlot $h={28}><Glyph name="notes" size={17} /></DockSlot>
              </DockGroup>
              <DockGroup $h={41}>
                <DockGrip />
                <DockSlot $h={32}><Glyph name="cube" size={18} /></DockSlot>
              </DockGroup>
              <DockGroup $h={97}>
                <DockGrip />
                <DockSlot $h={30}><Glyph name="libs" size={18} /></DockSlot>
                <DockSlot $h={31}><Glyph name="adjust" size={17} /></DockSlot>
                <DockSlot $h={29}><FxBadge>fx</FxBadge></DockSlot>
              </DockGroup>
              <DockGroup $h={41}>
                <DockGrip />
                <DockSlot $h={32}><Pilcrow>¶</Pilcrow></DockSlot>
              </DockGroup>
            </Dock>

            <Panels>
              <Panel $h={295}>
                <PanelTabs>
                  <PanelTab $active $w={68}>历史记录</PanelTab>
                  <PanelMenu />
                </PanelTabs>
                <PanelBody>
                  <ListColumn>
                    <HistorySnap>
                      <Glyph name="historyBrush" size={17} />
                      <Thumb />
                      <SnapName>未标题 -1</SnapName>
                    </HistorySnap>
                    <HistoryRow>
                      <CheckBox $dim />
                      <RowIcon><Glyph name="doc" size={16} /></RowIcon>
                      新建
                    </HistoryRow>
                    <HistoryRow $active>
                      <CheckBox $dim />
                      <RowIcon><Glyph name="doc" size={16} /></RowIcon>
                      新建图层
                    </HistoryRow>
                  </ListColumn>
                  <ScrollGutter />
                </PanelBody>
                <PanelFooter $h={25} $pr={25} $gap={15}>
                  <Glyph name="newSnap" size={16} />
                  <Glyph name="camera" size={16} />
                  <Glyph name="trash" size={16} />
                </PanelFooter>
              </Panel>

              <Panel $h={422}>
                <PanelTabs>
                  <PanelTab $active $w={45}>图层</PanelTab>
                  <PanelTab $w={44}>路径</PanelTab>
                  <PanelTab $w={45}>通道</PanelTab>
                  <PanelMenu />
                </PanelTabs>
                <ControlRow $h={33} $pt={6}>
                  <DarkSelect $w={86} $h={22}>
                    <Glyph name="filterSearch" size={11} />
                    <FilterName>类型</FilterName>
                    <Glyph name="chevron" size={10} dim />
                  </DarkSelect>
                  <Slot $w={11} />
                  <Slot $w={24}><Glyph name="imageF" size={14} /></Slot>
                  <Slot $w={24}><Glyph name="adjust" size={13} /></Slot>
                  <Slot $w={24}><Glyph name="type" size={13} /></Slot>
                  <Slot $w={24}><Glyph name="transformF" size={13} /></Slot>
                  <Slot $w={24}><Glyph name="smartF" size={13} /></Slot>
                  <FilterToggle />
                </ControlRow>
                <ControlRow $h={30}>
                  <DarkSelect $w={118} $h={23}>
                    正常
                    <Glyph name="chevron" size={10} dim />
                  </DarkSelect>
                  <Slot $w={6} />
                  <RowLabel $w={56}>不透明度:</RowLabel>
                  <NumberBox $up={3}>
                    <NumberValue>100%</NumberValue>
                    <NumberArrow><Glyph name="chevron" size={10} /></NumberArrow>
                  </NumberBox>
                </ControlRow>
                <ControlRow $h={30}>
                  <LockLabel $w={37}>锁定:</LockLabel>
                  <LockIcons>
                    <Glyph name="checker" size={14} />
                    <Glyph name="brush" size={16} />
                    <Glyph name="move" size={16} />
                    <Glyph name="artboard" size={16} />
                    <Glyph name="lock" size={15} />
                  </LockIcons>
                  <RowLabel $w={32}>填充:</RowLabel>
                  <NumberBox $up={3}>
                    <NumberValue>100%</NumberValue>
                    <NumberArrow><Glyph name="chevron" size={10} /></NumberArrow>
                  </NumberBox>
                </ControlRow>
                <PanelBody>
                  <LayerList>
                    <LayerRow $active>
                      <EyeCell><Glyph name="eye" size={15} /></EyeCell>
                      <LayerThumb $sel><Thumb $checker /></LayerThumb>
                      <LayerName>图层  1</LayerName>
                    </LayerRow>
                    <LayerRow>
                      <EyeCell><Glyph name="eye" size={15} /></EyeCell>
                      <LayerThumb><Thumb /></LayerThumb>
                      <LayerName>背景</LayerName>
                      <LayerLock><Glyph name="lockOpen" size={13} /></LayerLock>
                    </LayerRow>
                  </LayerList>
                  <ScrollGutter />
                </PanelBody>
                <PanelFooter $h={24} $pr={25} $gap={12}>
                  <Glyph name="link" size={15} dim />
                  <FooterFx>fx</FooterFx>
                  <Glyph name="mask" size={15} />
                  <Glyph name="adjust" size={14} />
                  <Glyph name="folder" size={15} />
                  <Glyph name="newLayer" size={14} />
                  <Glyph name="trash" size={15} />
                </PanelFooter>
              </Panel>
            </Panels>
          </DockAndPanels>
        </RightSide>
      </Workspace>

      <MenuPanel $x={203} $y={25} $w={213}>{renderMenu(layerMenu)}</MenuPanel>
      <MenuPanel $x={411} $y={215} $w={126}>{renderMenu(styleMenu)}</MenuPanel>

      <Callout />

      <Watermark>
        <MarkTop>
          <MarkBai>Bai</MarkBai>
          <MarkPaw>
            <Svg viewBox="0 0 58 62" width={58} height={62} fill="currentColor" $color="#cbcbcb">
              <ellipse cx="9" cy="24" rx="7" ry="10" />
              <ellipse cx="22" cy="10" rx="6.5" ry="9" />
              <ellipse cx="39" cy="12" rx="7" ry="9" />
              <ellipse cx="50" cy="28" rx="7" ry="10" />
              <path d="M29 27c7 0 10 6 15 10 5 3 9 8 8 14-1 7-6 10-13 10-4 0-7-1-10-2-3 1-6 2-11 2-7 0-12-4-12-10 0-7 5-11 9-14 5-3 7-10 14-10z" />
            </Svg>
            <MarkDu>du</MarkDu>
          </MarkPaw>
          <MarkCn>经验</MarkCn>
        </MarkTop>
        <MarkUrl>jingyan.baidu.com</MarkUrl>
      </Watermark>
    </Page>
  );
}
